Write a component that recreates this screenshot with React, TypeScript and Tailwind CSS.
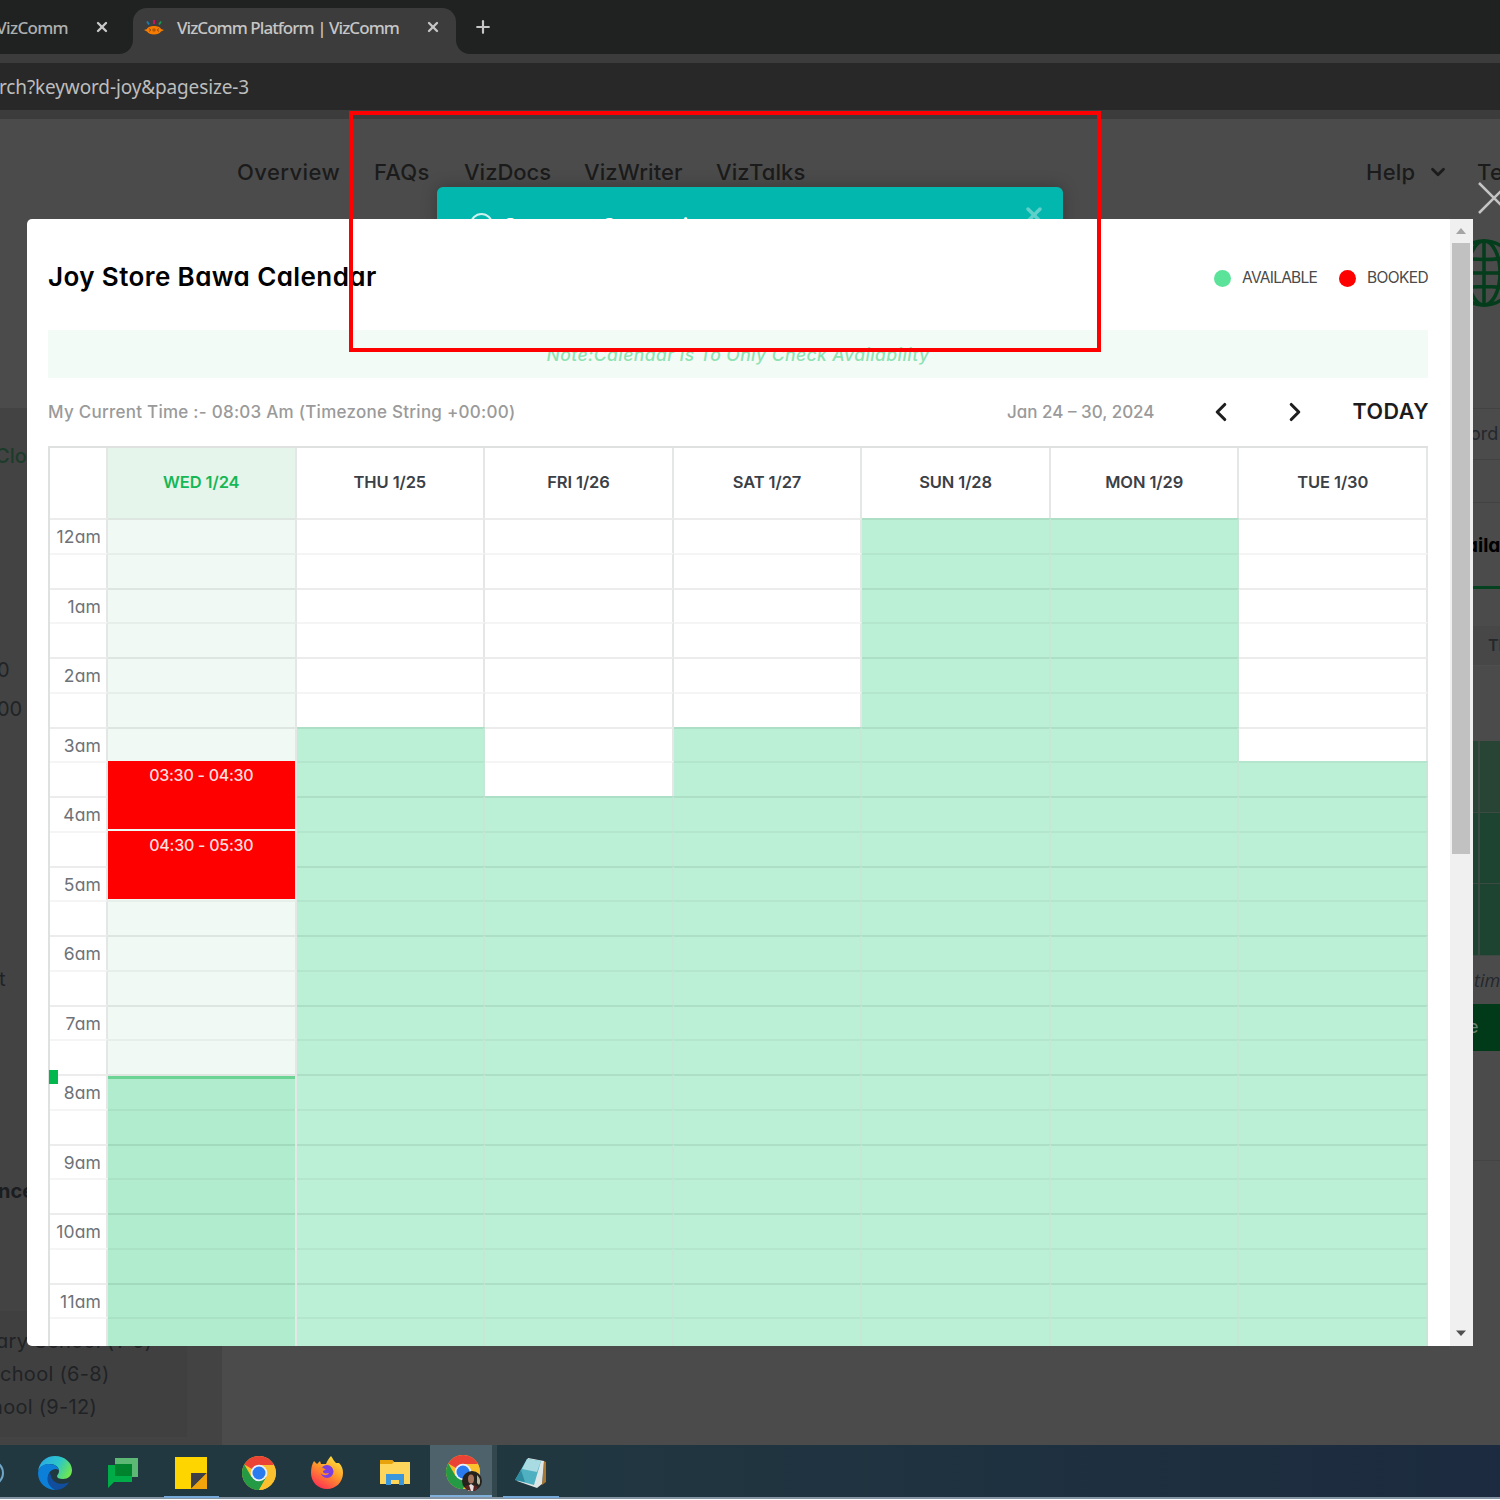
import React from 'react';
import clsx from 'clsx';
import { ChevronDown, ChevronLeft, ChevronRight, Plus, X } from 'lucide-react';

type Day = {
  label: string;
  // first half-hour slot that is available
  openFrom: number;
  today?: boolean;
};

const days: Day[] = [
  { label: 'WED 1/24', openFrom: 99, today: true },
  { label: 'THU 1/25', openFrom: 6 },
  { label: 'FRI 1/26', openFrom: 8 },
  { label: 'SAT 1/27', openFrom: 6 },
  { label: 'SUN 1/28', openFrom: 0 },
  { label: 'MON 1/29', openFrom: 0 },
  { label: 'TUE 1/30', openFrom: 7 },
];

const hours = ['12am', '1am', '2am', '3am', '4am', '5am', '6am', '7am', '8am', '9am', '10am', '11am'];

const slots = Array.from({ length: 24 }, (_, i) => i);

const slotLine = (i: number) => (i % 2 === 0 ? 'border-t-black/[0.075]' : 'border-t-black/[0.04]');

const VizLogo = () => (
  <svg className="w-5 h-4 mb-1.5" viewBox="0 0 20 16">
    <path d="M3 1.5l2 3" stroke="#1c7db5" strokeWidth="1.8" />
    <path d="M10 0v4" stroke="#c2185b" strokeWidth="2" />
    <path d="M17 1.5l-2 3" stroke="#1d9a52" strokeWidth="1.8" />
    <path d="M0 10l3-1C4 5 16 5 17 9l3 1-3 1.500C15 15.500 5 15.500 3 11.500z" fill="#f57c00" />
    <path d="M5 8.500l2 1.500-2 1.500M15 8.500l-2 1.500 2 1.500" stroke="#9c4d00" fill="none" />
    <circle cx="10" cy="10" r="1.800" fill="#b35a00" />
  </svg>
);

const BrowserTabs = () => (
  <div className="flex h-[54px] bg-[#3c3c3c] font-['Noto_Sans',sans-serif] text-[17px] font-medium text-[#c6c6c6]">
    <div className="flex items-center w-[133px] bg-[#202222] rounded-br-[14px] overflow-hidden">
      <span className="w-[68px] flex justify-end whitespace-nowrap tracking-[-0.7px] text-[#aeb0b0] pt-0.5">VizComm</span>
      <X className="ml-[26px] w-4 h-4 text-[#c9c9c9]" strokeWidth={3.5} />
    </div>
    <div className="w-[323px] h-[54px] pt-2 bg-[#202222]">
      <div className="flex items-center h-[46px] bg-[#3c3c3c] rounded-t-[14px] pl-[11px]">
        <VizLogo />
        <span className="ml-[13px] w-[222px] whitespace-nowrap tracking-[-0.95px] pb-1.5">
          VizComm Platform | VizComm
        </span>
        <X className="ml-[26px] w-4 h-4 mb-2" strokeWidth={3.5} />
      </div>
    </div>
    <div className="flex flex-1 items-center bg-[#202222] rounded-bl-[14px] pl-[17px]">
      <Plus className="w-5 h-5" strokeWidth={2.6} />
    </div>
  </div>
);

const NavBar = () => (
  <div className="flex items-center h-[106px] pl-[237px] text-[22px] font-medium tracking-[0.25px] text-[#1b1b1b] whitespace-nowrap">
    <span className="w-[137px] shrink-0 tracking-[0.4px]">Overview</span>
    <span className="w-[90px] shrink-0">FAQs</span>
    <span className="w-[120px] shrink-0 tracking-normal">VizDocs</span>
    <span className="w-[132px] shrink-0 tracking-[0.1px]">VizWriter</span>
    <span className="w-[650px] shrink-0 tracking-[0.1px]">VizTalks</span>
    <span className="w-[61px] shrink-0">Help</span>
    <ChevronDown className="w-[22px] h-[22px] shrink-0" strokeWidth={3} />
    <span className="ml-[28px]">Te</span>
  </div>
);

const SideColumn = () => (
  <div className="w-[222px] bg-[#434343] flex flex-col text-[20px] text-[#202326] whitespace-nowrap">
    <span className="mt-[31px] h-[34px] leading-[34px] -ml-[5px] text-[#1d3b2a] font-medium">Clos</span>
    <span className="mt-[180px] h-[34px] leading-[34px] -ml-[3px]">0</span>
    <span className="mt-[5px] h-[34px] leading-[34px] -ml-[3px]">00</span>
    <span className="mt-[236px] h-[34px] leading-[34px] -ml-[1px]">t</span>
    <span className="mt-[178px] h-[34px] leading-[34px] -ml-[2px] font-bold text-[#1b1d20]">nce</span>
    <div className="mt-[103px] w-[187px] h-[126px] pt-[14px] bg-[#404040] flex flex-col tracking-[0.3px]">
      <span className="h-[33px] leading-[33px] -ml-[4px]">ary School (1-5)</span>
      <span className="h-[33px] leading-[33px]">chool (6-8)</span>
      <span className="h-[33px] leading-[33px] -ml-[9px]">hool (9-12)</span>
    </div>
  </div>
);

const BookingColumn = () => (
  <div className="w-[28px] overflow-hidden flex flex-col text-[18px] text-[#24272b] whitespace-nowrap">
    <svg className="w-[68px] h-[68px] mt-[14px] -ml-[22px] shrink-0" viewBox="0 0 68 68" fill="none" stroke="#033d1b" strokeWidth="3.5">
      <circle cx="34" cy="34" r="32" />
      <ellipse cx="34" cy="34" rx="16" ry="32" />
      <path d="M34 2v64M2 34h64M7 18q27 5 54 0M7 50q27-5 54 0" />
    </svg>
    <div className="mt-[101px] h-[52px] border-y border-[#424242] leading-[50px] -ml-[2px]">ord</div>
    <div className="h-[43px] border-b border-[#424242]" />
    <div className="h-[86px] border-b-[3px] border-[#04421f]">
      <div className="-ml-[6px] leading-[85px] font-bold text-[19px] text-black">aila</div>
    </div>
    <div className="mt-[37px] h-[40px] bg-[#474747] leading-[39px] text-[16px] font-semibold pl-4 border-b border-[#4e4e4e]">TH</div>
    <div className="mt-[75px] h-[215px] bg-[#1d4430] flex flex-col">
      {['bg-[#284434]', 'bg-[#1d4430]', 'bg-[#1d4430]'].map((bg, i) => (
        <div key={i} className={clsx('flex-1 flex border-b border-[#3d4a43]', bg)}>
          <div className="w-[8px] border-r-2 border-[#3d4a43]" />
        </div>
      ))}
    </div>
    <div className="h-[48px] leading-[49px] italic pl-[2px] font-['Open_Sans',sans-serif]">time</div>
    <div className="h-[47px] bg-[#003a19] leading-[46px] text-[#6a8171] -ml-[6px] pl-[2px]">e</div>
    <div className="h-[110px] border-b border-[#444]" />
  </div>
);

const Toast = () => (
  <div className="absolute left-[437px] top-[187px] w-[626px] h-[100px] rounded-md bg-[#02b7ae] shadow-[0_0_16px_rgba(0,0,0,0.25)]">
    <div className="flex items-start justify-between pl-[33px] pr-[17px] pt-[16px]">
      <div className="flex items-start gap-[10px] pt-[10px] text-white">
        <span className="w-[23px] h-[23px] rounded-full border-2 border-white/80" />
        <span className="text-[22px] leading-[26px] font-medium tracking-[1.1px]">Support Screening</span>
      </div>
      <X className="w-[24px] h-[24px] text-[#5fd0ca]" strokeWidth={3.5} />
    </div>
  </div>
);

const BookedEvent = ({ time, className }: { time: string; className: string }) => (
  <div
    className={clsx(
      'absolute left-0 right-[2px] h-[68px] bg-[#ff0000] text-center text-[16px] leading-[28px] font-medium text-[#ffdede] tracking-[-0.25px]',
      className
    )}
  >
    {time}
  </div>
);

const DayColumn = ({ day }: { day: Day }) => (
  <div className="flex-1 flex flex-col">
    <div
      className={clsx(
        'h-[70px] shrink-0 flex items-center justify-center border-r-2 border-[#e4e7e6] pb-px text-[16.5px] font-semibold tracking-[-0.1px]',
        day.today ? 'bg-[#e5f5eb] text-[#16b755]' : 'text-[#3b4046]'
      )}
    >
      {day.label}
    </div>
    <div className={clsx('relative flex flex-col', day.today && 'bg-[#f0f9f4]')}>
      {day.today && (
        <div className="absolute left-0 right-[2px] top-[558px] h-[280px] bg-[#b0eccd] border-t-[3px] border-[#6bd494]" />
      )}
      {slots.map((slot) => (
        <div
          key={slot}
          className={clsx(
            'relative h-[34.75px] border-t-2 border-r-2',
            slotLine(slot),
            slot >= day.openFrom ? 'bg-[#bbf0d6] border-r-[#c6e6d6]' : 'border-r-[#e4e7e6]'
          )}
        />
      ))}
      {day.today && (
        <>
          <BookedEvent time="03:30 - 04:30" className="top-[243px]" />
          <BookedEvent time="04:30 - 05:30" className="top-[312.500px]" />
        </>
      )}
    </div>
  </div>
);

const HourAxis = () => (
  <div className="relative w-[58px]">
    <div className="h-[70px] border-r-2 border-[#e4e7e6]" />
    {slots.map((slot) => (
      <div
        key={slot}
        className={clsx(
          'h-[34.75px] border-t-2 border-r-2 border-r-[#e4e7e6] pr-[5px] text-right text-[17.500px] leading-[33px] tracking-[0.15px] text-[#6d7278]',
          slotLine(slot)
        )}
      >
        {slot % 2 === 0 && hours[slot / 2]}
      </div>
    ))}
    <div className="absolute -left-px top-[622px] w-[9px] h-[14px] bg-[#02b74e]" />
  </div>
);

const CalendarModal = () => (
  <div className="absolute left-[27px] top-[219px] w-[1446px] h-[1127px] flex bg-white rounded-l-[5px] overflow-hidden">
    <div className="w-[1423px] pl-[21px] pr-[22px]">
      <div className="flex items-center justify-between h-[111px] pt-[4px]">
        <h2 className="text-[26px] font-semibold tracking-[0.4px] text-black">Joy Store Bawa Calendar</h2>
        <div className="flex items-center text-[15.5px] text-[#4a4a4a] pt-0.5">
          <span className="w-[17px] h-[17px] rounded-full bg-[#5ce39a] mt-px" />
          <span className="ml-[11px] w-[76px] whitespace-nowrap tracking-[-0.75px]">AVAILABLE</span>
          <span className="ml-[21px] w-[17px] h-[17px] rounded-full bg-[#ff0000] mt-px" />
          <span className="ml-[11px] w-[61px] whitespace-nowrap tracking-[-0.6px]">BOOKED</span>
        </div>
      </div>
      <div className="h-[48px] bg-[#f3fbf7] text-center leading-[49px] italic text-[17.5px] tracking-[0.43px] text-[#8ee2b1] font-medium">
        Note:Calendar Is To Only Check Availability
      </div>
      <div className="flex items-center h-[68px] text-[17px] font-medium text-[#9a9a9a] whitespace-nowrap">
        <span className="w-[959px] tracking-[0.26px] pt-0.5">My Current Time :- 08:03 Am (Timezone String +00:00)</span>
        <span className="w-[199px] pt-0.5">Jan 24 – 30, 2024</span>
        <ChevronLeft className="w-[30px] h-[30px] text-[#1f1f1f]" strokeWidth={2.5} />
        <ChevronRight className="ml-[44px] w-[30px] h-[30px] text-[#1f1f1f]" strokeWidth={2.5} />
        <span className="ml-auto -mr-px text-[21.500px] font-semibold tracking-[0.5px] text-[#1c1c1c] pb-px">TODAY</span>
      </div>
      <div className="flex border-t-2 border-l-2 border-[#dfe1e0]">
        <HourAxis />
        {days.map((day) => (
          <DayColumn key={day.label} day={day} />
        ))}
      </div>
    </div>
    <div className="w-[23px] bg-[#f0f0f0] flex flex-col items-center pr-[2px]">
      <svg className="w-[10px] h-[24px] shrink-0" viewBox="0 0 10 24">
        <path d="M0 15l5-6 5 6z" fill="#a5a5a5" />
      </svg>
      <div className="w-[18px] h-[611px] bg-[#c1c1c1]" />
      <svg className="mt-auto w-[10px] h-[25px]" viewBox="0 0 10 25">
        <path d="M0 9.500l5 5.500 5-5.500z" fill="#505050" />
      </svg>
    </div>
  </div>
);

const ChromeIcon = ({ className }: { className?: string }) => (
  <svg className={className} viewBox="0 0 34 34">
    <circle cx="17" cy="17" r="17" fill="#fbc02d" />
    <path d="M17 17L2.300 8.500A17 17 0 0 1 31.700 8.500z" fill="#ea4335" />
    <path d="M17 17L9.500 21 2.300 8.500A17 17 0 0 0 17 34L24.500 21z" fill="#249a45" />
    <path d="M17 9h14.900A17 17 0 0 1 17 34l7.500-13z" fill="#fbc02d" />
    <circle cx="17" cy="17" r="8.300" fill="#e8f0fe" />
    <circle cx="17" cy="17" r="6.500" fill="#2b7bf0" />
  </svg>
);

const Taskbar = () => (
  <div className="flex h-[54px] bg-linear-to-r from-[#213840] from-30% to-[#1c2b3f] border-b-2 border-[#8494a3]">
    <div className="w-[21px] flex items-center pt-[3px]">
      <svg className="w-[6px] h-[30px]" viewBox="0 0 6 30">
        <circle cx="-9" cy="15" r="12" fill="none" stroke="#6fa6c8" strokeWidth="2" />
      </svg>
    </div>
    <div className="w-[68px] flex items-center justify-center pt-[3px]">
      <svg className="w-[34px] h-[34px]" viewBox="0 0 34 34">
        <defs>
          <linearGradient id="edgeTop" x1="0" x2="1" y1="0.200" y2="0.600">
            <stop offset="0" stopColor="#2ba7e8" />
            <stop offset="0.550" stopColor="#2cc6c9" />
            <stop offset="1" stopColor="#6fe64f" />
          </linearGradient>
        </defs>
        <path d="M0 16C1 6 8 0 17 0c10 0 17 7 17 14 0 6-4 9-9 9-4 0-6-1-6-3 0-1 2-2 2-5 0-4-4-7-9-7C6 8 1 11 0 16z" fill="url(#edgeTop)" />
        <path d="M0 17C1 10 6 8 11 8c6 0 9 3 10 6-5-3-11 1-11 8 0 5 3 10 8 12C8 34 0 27 0 17z" fill="#0c7fd8" />
        <path d="M12 17c-4 3-4 13 6 17 6 0 11-4 13-8-5 3-16 3-18-6z" fill="#114f9e" />
      </svg>
    </div>
    <div className="w-[68px] flex items-center justify-center pt-[3px]">
      <svg className="w-[30px] h-[32px]" viewBox="0 0 30 32">
        <path d="M7 1h23v19h-6V7H7z" fill="#5cb874" />
        <path d="M0 8h7v11h17v6H6l-6 6z" fill="#00ac47" />
        <path d="M7 7h17v12H7z" fill="#00832d" />
      </svg>
    </div>
    <div className="relative w-[68px] flex items-center justify-center pt-[3px]">
      <svg className="w-[32px] h-[32px]" viewBox="0 0 32 32">
        <path d="M0 0h32v32H0z" fill="#ffd500" />
        <path d="M16 16h16L16 32z" fill="#3f3f46" />
        <path d="M32 16v16H16z" fill="#f0a30a" />
      </svg>
      <div className="absolute -bottom-px left-[7px] w-[55px] h-[2px] bg-[#76a9d8]" />
    </div>
    <div className="w-[68px] flex items-center justify-center pt-[3px]">
      <ChromeIcon className="w-[34px] h-[34px]" />
    </div>
    <div className="w-[68px] flex items-center justify-center pt-[3px]">
      <svg className="w-[32px] h-[33px]" viewBox="0 0 32 33">
        <defs>
          <linearGradient id="fox" x1="0.800" x2="0.200" y1="0" y2="1">
            <stop offset="0" stopColor="#ffe843" />
            <stop offset="0.450" stopColor="#ff9a28" />
            <stop offset="1" stopColor="#ff2757" />
          </linearGradient>
        </defs>
        <path d="M3 5l3 3 3-3 1 3 5 0c1-3 3-6 5-8 2 3 3 5 5 7l3 0c3 3 4 6 4 10 0 9-7 16-16 16S0 26 0 17C0 12 1 8 3 5z" fill="url(#fox)" />
        <circle cx="16" cy="15.500" r="6.500" fill="#7b3fe0" />
        <path d="M8 11c3 0 5 1 7 3-3 0-4 2-2 3 2 1 3 0 5 0-2 4-10 3-10-6z" fill="#ff8a24" />
      </svg>
    </div>
    <div className="w-[68px] flex items-center justify-center pt-[3px]">
      <svg className="w-[30px] h-[25px]" viewBox="0 0 30 25">
        <path d="M0 0h12l2 2h16v22H0z" fill="#ffd65c" />
        <path d="M0 0h12l2 2-2 2H0z" fill="#e8a20c" />
        <path d="M6 14h18v11h-5v-5h-8v5H6z" fill="#3a96dd" />
      </svg>
    </div>
    <div className="relative w-[62px] ml-px bg-[#4e626b] flex items-center justify-center pt-[3px] border-b-2 border-[#7fb0dc]">
      <ChromeIcon className="w-[34px] h-[34px] ml-1" />
      <svg className="absolute left-[32px] top-[25px] w-[20px] h-[22px]" viewBox="0 0 20 22">
        <circle cx="10" cy="11" r="10" fill="#26221d" />
        <path d="M15 5q5 5 2 10l-2-2z" fill="#b5b59a" />
        <ellipse cx="9" cy="9" rx="3" ry="4.500" fill="#a5745c" />
        <path d="M6 16l3-2 3 2 3 2-3 3H6z" fill="#e9dede" />
        <path d="M3 16l4-1 2 6-4-1zM12 15l4 2-3 4-2 0z" fill="#5c2222" />
      </svg>
    </div>
    <div className="w-[5px] bg-[#33474f]" />
    <div className="relative w-[68px] flex items-center justify-center pt-[3px]">
      <svg className="w-[32px] h-[32px]" viewBox="0 0 32 32">
        <path d="M29 4l2 1v20l-4 3z" fill="#a9752f" />
        <path d="M13 1l16 3-2 23-5 4L2 24z" fill="#dfe6e6" />
        <path d="M12 2l14 2-7 24L0 23z" fill="#4fb0c2" />
        <path d="M12 2l14 2-4 11-15-3z" fill="#a8dbe2" />
        <path d="M0 23l6-10 4 12z" fill="#2e8ba0" />
      </svg>
      <div className="absolute -bottom-px left-[6px] w-[56px] h-[2px] bg-[#76a9d8]" />
    </div>
  </div>
);

const App = () => {
  return (
    <div className="relative w-[1500px] h-[1500px] overflow-hidden bg-white flex flex-col font-['Inter',sans-serif] [font-feature-settings:'cv11']">
      <BrowserTabs />
      <div className="h-[65px] py-[9px] bg-[#3c3c3c]">
        <div className="h-[47px] bg-[#282828] leading-[48px] font-['Noto_Sans',sans-serif] text-[19px] tracking-[-0.13px] text-[#bdbdbd] -indent-px">
          rch?keyword-joy&amp;pagesize-3
        </div>
      </div>
      <div className="h-[1326px] bg-[#4b4b4b] flex flex-col overflow-hidden">
        <NavBar />
        <div className="flex justify-between flex-1">
          <div className="flex bg-[#4b4b4b] pt-[183px]">
            <SideColumn />
          </div>
          <BookingColumn />
        </div>
      </div>
      <Taskbar />

      <Toast />
      <CalendarModal />
      <svg className="absolute left-[1478px] top-[182px] w-[22px] h-[32px]" viewBox="0 0 22 32">
        <path d="M1 1l30 30M1 31L31 1" stroke="#c4c4c4" strokeWidth="2.500" />
      </svg>
      <div className="absolute left-[349px] top-[111px] w-[752px] h-[241px] border-4 border-[#ff0000]" />
    </div>
  );
};

export default App;
